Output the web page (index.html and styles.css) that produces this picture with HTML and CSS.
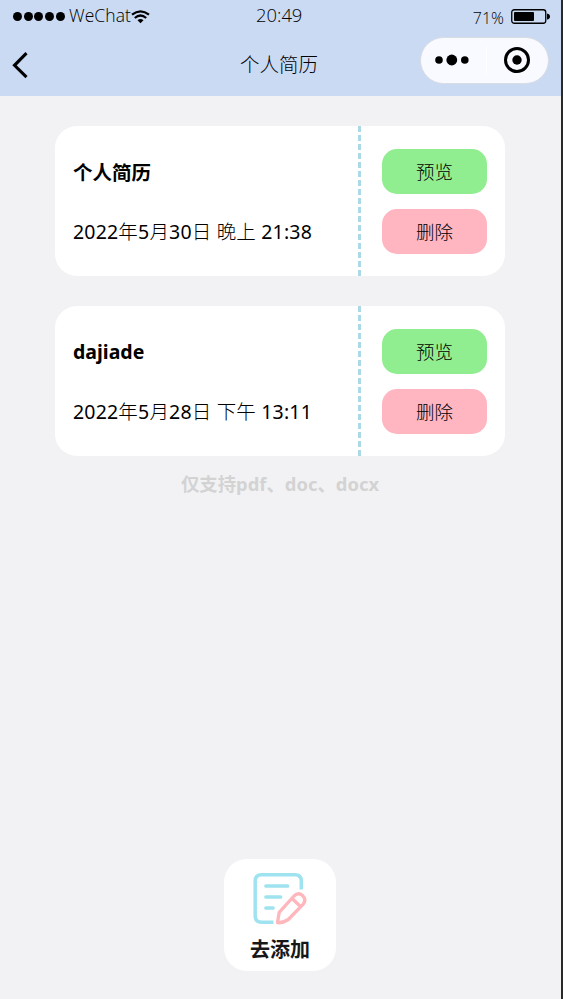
FILE: index.html
```
<!DOCTYPE html>
<html lang="zh-CN">
<head>
<meta charset="utf-8">
<title>个人简历</title>
<link rel="stylesheet" href="styles.css">
</head>
<body>
<div class="screen">
  <header class="top">
    <div class="status">
      <div class="carrier">
        <i class="sig"></i><i class="sig"></i><i class="sig"></i><i class="sig"></i><i class="sig"></i>
        <span class="network">WeChat</span>
        <svg class="wifi" width="19" height="14" viewBox="0 0 19 14" fill="none" stroke="#000" stroke-width="2.200">
          <path d="M1 4.600Q9.500-2 18 4.600M3.800 8Q9.500 3 15.200 8"/>
          <path d="M6.500 10.300Q9.500 7.700 12.500 10.300L9.500 13.200Z" fill="#000" stroke="none"/>
        </svg>
      </div>
      <div class="time">20:49</div>
      <div class="power">
        <span class="percent">71%</span>
        <svg width="40" height="16" viewBox="0 0 40 16">
          <rect x=".75" y=".75" width="34" height="13.500" rx="2.500" fill="none" stroke="#000" stroke-width="1.300"/>
          <rect x="3" y="3" width="20" height="9" rx="1"/>
          <path d="M36 4.500Q39 5 39 7.500T36 10.500Z"/>
        </svg>
      </div>
    </div>
    <nav class="nav">
      <svg class="back" width="17" height="28" viewBox="0 0 17 28" fill="none" stroke="#000" stroke-width="3.100"><path d="M14.500 2.200L2.500 14.300L14.500 26.200"/></svg>
      <h1>个人简历</h1>
      <div class="capsule">
        <svg width="34" height="12" viewBox="0 0 34 12"><circle cx="4" cy="6" r="3.800"/><circle cx="16.800" cy="6" r="5.400"/><circle cx="29.800" cy="6" r="3.800"/></svg>
        <span class="split"></span>
        <svg width="26" height="26" viewBox="0 0 26 26"><circle cx="13" cy="13" r="11.500" fill="none" stroke="#000" stroke-width="3"/><circle cx="13" cy="13" r="4.700"/></svg>
      </div>
    </nav>
  </header>
  <main class="content">
    <article class="card">
      <div class="info"><h2>个人简历</h2><p>2022<span>年</span>5<span>月</span>30<span>日 晚上</span> 21:38</p></div>
      <div class="actions"><button class="view">预览</button><button class="remove">删除</button></div>
    </article>
    <article class="card">
      <div class="info"><h2 class="latin">dajiade</h2><p>2022<span>年</span>5<span>月</span>28<span>日 下午</span> 13:11</p></div>
      <div class="actions"><button class="view">预览</button><button class="remove">删除</button></div>
    </article>
    <p class="hint">仅支持pdf、doc、docx</p>
  </main>
  <button class="add">
    <svg width="56" height="54" viewBox="0 0 56 54" fill="none" stroke-linecap="round" stroke-linejoin="round">
      <path d="M21.500 50.200H10Q3.200 50.200 3.200 43.900V9Q3.200 2.700 9.500 2.700H43Q49.300 2.700 49.300 9V17.500" stroke="#9fe3f0" stroke-width="3.500" stroke-linecap="butt"/>
      <path d="M14 14H35.500M14 25H28.500M14 36H21" stroke="#9fe3f0" stroke-width="3.700"/>
      <path d="M25.500 50.700L27.200 40.300L42 24Q46.200 19.700 50.500 23.500Q55 27.700 51 32.300L36.300 47.500Q30.500 51.200 25.500 50.700ZM40.300 26.700L48 34" stroke="#ffb6bc" stroke-width="3.300"/>
    </svg>
    <span>去添加</span>
  </button>
</div>
</body>
</html>
```
FILE: styles.css
```
* { box-sizing: border-box; }
body { margin: 0; background: #292929; font-family: "Noto Sans", "Noto Sans CJK SC", sans-serif; color: #000; }
h1, h2, p { margin: 0; font-weight: 400; }
button { border: 0; padding: 0; font-family: inherit; color: #000; }
svg { display: block; flex: none; }
.screen { width: 561px; height: 999px; background: #f2f2f4; display: flex; flex-direction: column; align-items: flex-start; }
.top { width: 100%; height: 96px; background: #cadaf3; }
.status { height: 33px; display: grid; grid-template-columns: 243px 46px 1fr; padding: 0 10px 0 13px; font-family: "Open Sans", sans-serif; font-weight: 300; line-height: 30px; }
.carrier { display: flex; align-items: center; gap: 1.700px; }
.sig { width: 9px; height: 9px; border-radius: 50%; background: #000; }
.network { font-size: 17.500px; margin: -3px 0 0 2.500px; width: 63px; letter-spacing: .1px; }
.wifi { margin-left: -3px; }
.time { font-size: 18.400px; }
.power { display: flex; align-items: center; justify-content: flex-end; gap: 7px; }
.percent { font-size: 16px; padding-top: 2px; }
.nav { height: 63px; display: grid; grid-template-columns: 228px auto 1fr; padding: 0 12px 0 12px; }
.back { margin-top: 18px; }
h1 { font-size: 19.500px; line-height: 28px; padding-top: 17.500px; font-weight: 300; }
.capsule { justify-self: end; width: 129px; height: 47px; margin-top: 3.500px; border: 1px solid #d9dce3; border-radius: 24px; background: #f9faff; display: flex; align-items: center; padding: 0 18px 0 14px; justify-content: space-between; }
.split { width: 1px; height: 27px; background: #fff; }
.content { width: 450px; margin-left: 55px; padding-top: 30px; display: flex; flex-direction: column; }
.card { height: 150px; margin-bottom: 30px; background: #fff; border-radius: 22px; display: flex; }
.info { width: 303px; padding: 33px 0 0 18px; }
h2 { font-size: 19.500px; line-height: 28px; font-weight: 700; }
.latin { letter-spacing: 0; position: relative; top: -1px; }
.info p { font-size: 19.500px; line-height: 28px; margin-top: 31px; white-space: nowrap; letter-spacing: .18px; }
.info p span { font-weight: 300; }
.actions { flex: 1; border-left: 3px dashed #add8e6; padding: 23px 0 0 21px; display: flex; flex-direction: column; gap: 15px; }
.actions button { width: 105px; height: 45px; border-radius: 15px; font-size: 18.500px; line-height: 45px; font-weight: 300; }
.view { background: #90ee90; }
.remove { background: #ffb6c1; }
.hint { margin-top: -15px; text-align: center; font-size: 18.400px; line-height: 26px; font-weight: 700; color: #d3d3d3; }
.add { width: 112px; height: 112px; margin: auto 0 28px 224px; border-radius: 23px; background: #fff; display: flex; flex-direction: column; align-items: center; padding-top: 13px; }
.add span { font-size: 20px; line-height: 28px; font-weight: 700; margin-top: 10px; color: #171717; }
```
